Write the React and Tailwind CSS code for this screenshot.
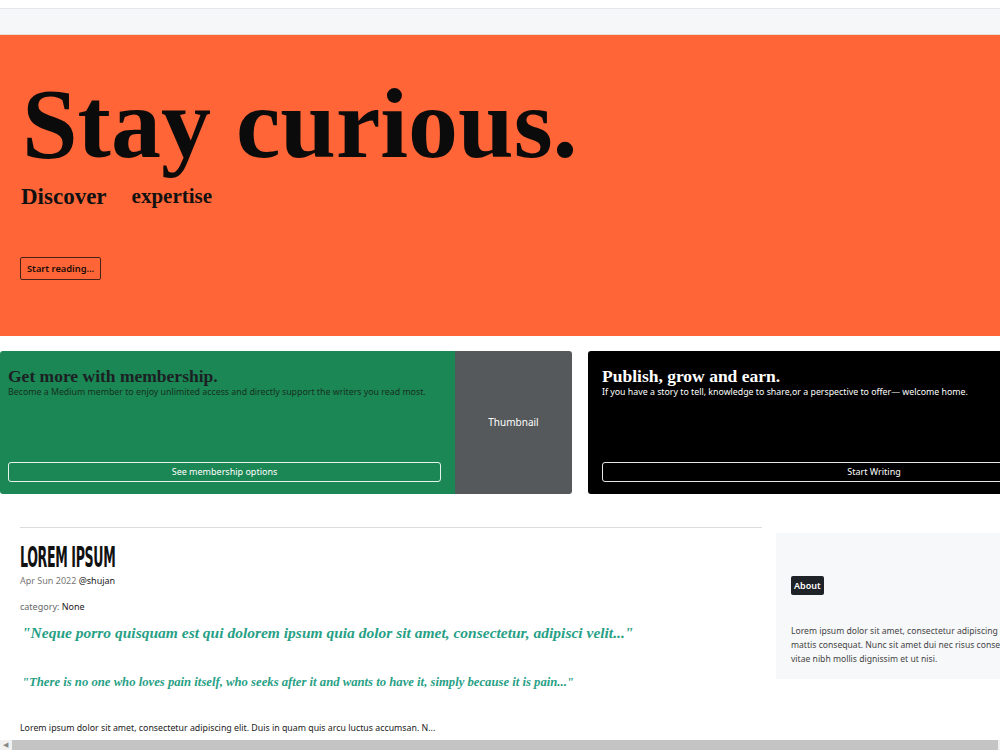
import React from "react";

const serif = { fontFamily: '"Liberation Serif", "DejaVu Serif", serif' };

const MemberCard = () => {
  return (
    <div className="flex w-[572px] h-[143px] shrink-0 rounded-[3px] overflow-hidden">
      <div className="w-[455px] bg-[#1a8754] pl-2 pr-[14px] pt-[14px] pb-3 flex flex-col">
        <h3 className="text-[17.5px] leading-[22px] font-bold text-[#1c1f23]" style={serif}>
          Get more with membership.
        </h3>
        <p className="text-[8.8px] leading-[11px] text-[#16301f]">
          Become a Medium member to enjoy unlimited access and directly support the writers you read most.
        </p>
        <button className="mt-auto h-5 w-full border border-white/90 rounded-[3px] text-white text-[9px]">
          See membership options
        </button>
      </div>
      <div className="w-[117px] bg-[#55595c] flex items-center justify-center text-white text-[10px]">
        Thumbnail
      </div>
    </div>
  );
};

const WriterCard = () => {
  return (
    <div className="w-[572px] h-[143px] shrink-0 bg-black rounded-[3px] px-[14px] pt-[14px] pb-3 flex flex-col">
      <h3 className="text-[17.5px] leading-[22px] font-bold text-white" style={serif}>
        Publish, grow and earn.
      </h3>
      <p className="text-[8.8px] leading-[11px] text-white">
        If you have a story to tell, knowledge to share,or a perspective to offer— welcome home.
      </p>
      <button className="mt-auto h-5 w-full border border-white/90 rounded-[3px] text-white text-[9px]">
        Start Writing
      </button>
    </div>
  );
};

const Post = () => {
  return (
    <div className="w-[742px] shrink-0">
      <hr className="border-t border-[#dcdcdc]" />
      <h2
        className="mt-[15px] inline-block origin-left scale-x-[0.5] text-[28px] leading-[30px] font-bold text-[#111] tracking-tight"
        style={{ fontFamily: '"DejaVu Sans Condensed", "DejaVu Sans", sans-serif' }}
      >
        LOREM IPSUM
      </h2>
      <p className="mt-[2px] text-[9px] leading-[12px] text-[#777]">
        Apr Sun 2022 <span className="text-[#222]">@shujan</span>
      </p>
      <p className="mt-[14px] text-[9px] leading-[12px] text-[#666]">
        category: <span className="text-[#222]">None</span>
      </p>
      <p className="mt-[10px] ml-[2px] text-[15.5px] leading-[20px] font-bold italic text-[#27a085]" style={serif}>
        "Neque porro quisquam est qui dolorem ipsum quia dolor sit amet, consectetur, adipisci velit..."
      </p>
      <p className="mt-[30px] ml-[2px] text-[12.7px] leading-[18px] font-bold italic text-[#27a085]" style={serif}>
        "There is no one who loves pain itself, who seeks after it and wants to have it, simply because it is pain..."
      </p>
      <p className="mt-[31px] text-[8.8px] leading-[12px] text-[#222]">
        Lorem ipsum dolor sit amet, consectetur adipiscing elit. Duis in quam quis arcu luctus accumsan. N...
      </p>
    </div>
  );
};

const Sidebar = () => {
  return (
    <div className="ml-[14px] mt-[6px] w-[300px] h-[146px] shrink-0 bg-[#f7f8fa] pl-[15px] pt-[38px]">
      <span className="inline-block bg-[#1f2226] text-white text-[9px] font-semibold leading-[19px] px-[3px] rounded-[2px]">
        About
      </span>
      <div className="mt-[29px] text-[8.6px] leading-[14px] text-[#444] whitespace-nowrap">
        <p>Lorem ipsum dolor sit amet, consectetur adipiscing elit. Aliquam erat</p>
        <p>mattis consequat. Nunc sit amet dui nec risus consectetur rhoncus</p>
        <p>vitae nibh mollis dignissim et ut nisi.</p>
      </div>
    </div>
  );
};

export default function App() {
  return (
    <div
      className="w-[1000px] h-[750px] overflow-hidden bg-white relative"
      style={{ fontFamily: '"Noto Sans", "Open Sans", sans-serif' }}
    >
      <div className="h-[9px] bg-white border-b border-[#e4e6ea]" />
      <div className="h-[26px] bg-[#f6f7f9] border-b border-[#e9dcd5]" />

      <section className="h-[301px] bg-[#ff6536] pl-[22px] pt-[39px]">
        <h1 className="text-[100px] leading-[100px] font-bold text-[#0b0b0b]" style={serif}>
          Stay curious.
        </h1>
        <div className="mt-[9px] flex items-start font-bold text-[#111]" style={serif}>
          <span className="-ml-[1px] text-[23px] leading-[28px]">Discover</span>
          <span className="ml-[25px] -mt-[1px] text-[21px] leading-[28px]">expertise</span>
        </div>
        <button className="mt-[46px] -ml-[2px] h-[23px] px-[6px] border border-[#4a2116] rounded-[2px] text-[9.3px] font-semibold text-[#1a0c08]">
          Start reading...
        </button>
      </section>

      <div className="mt-[15px] flex gap-4">
        <MemberCard />
        <WriterCard />
      </div>

      <div className="mt-[33px] pl-5 flex items-start">
        <Post />
        <Sidebar />
      </div>

      <div className="absolute left-0 bottom-0 w-full h-[10px] bg-[#f1f1f1] flex items-center">
        <span className="w-[10px] text-[7px] leading-[10px] text-[#888] text-center">◀</span>
        <div className="ml-[2px] h-[10px] w-[986px] bg-[#c4c4c4]" />
      </div>
    </div>
  );
}
